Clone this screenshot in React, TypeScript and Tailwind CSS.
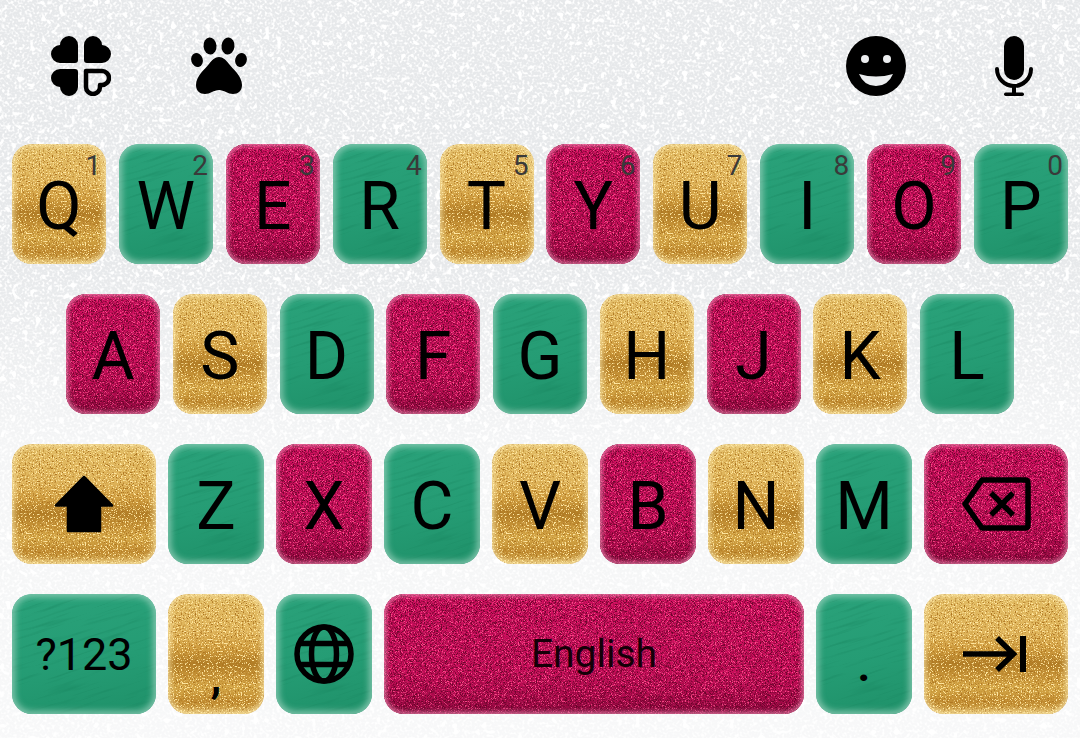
import React from 'react';

type Tone = 'gold' | 'green' | 'rose';

const toneBg: Record<Tone, string> = {
  gold: 'bg-[linear-gradient(180deg,#e2bc64_0%,#dfb45a_32%,#cf9c3e_46%,#b27e26_58%,#c69337_68%,#d5a747_78%,#c08b30_90%,#dcb35a_100%)]',
  green: 'bg-[linear-gradient(170deg,#2aa27a_0%,#259c74_55%,#1f9169_100%)]',
  rose: 'bg-[linear-gradient(180deg,#d20f60_0%,#ca0e5b_65%,#a80b4a_100%)]',
};

const toneEdge: Record<Tone, string> = {
  gold: 'shadow-[inset_0_0_6px_2px_rgba(252,236,180,0.8)]',
  green: 'shadow-[inset_0_0_6px_3px_rgba(165,215,197,0.7)]',
  rose: 'shadow-[inset_0_0_5px_2px_rgba(240,150,185,0.75),inset_0_-10px_14px_-2px_rgba(70,0,30,0.3)]',
};

function Grain({ tone }: { tone: Tone }) {
  return (
    <svg className="absolute inset-0 h-full w-full" aria-hidden="true">
      {tone === 'gold' && <rect width="100%" height="100%" filter="url(#gold-dark)" />}
      {tone === 'gold' && <rect width="100%" height="100%" filter="url(#gold-light)" />}
      {tone === 'green' && (
        <rect x="-200" y="-200" width="1000" height="600" filter="url(#green-wood)" transform="rotate(-18)" />
      )}
      {tone === 'rose' && <rect width="100%" height="100%" filter="url(#rose-dark)" />}
      {tone === 'rose' && <rect width="100%" height="100%" filter="url(#rose-light)" />}
    </svg>
  );
}

function Key({
  tone,
  className = '',
  hint,
  children,
}: {
  tone: Tone;
  className?: string;
  hint?: string;
  children: React.ReactNode;
}) {
  return (
    <div className={`relative h-[120px] overflow-hidden rounded-[20px] ${toneBg[tone]} ${className}`}>
      <Grain tone={tone} />
      <div className={`absolute inset-0 rounded-[20px] ${toneEdge[tone]}`} />
      {hint && (
        <span className="absolute right-[5px] top-[6px] text-[28px] leading-[32px] text-[#3a3a3a]">{hint}</span>
      )}
      <div className="relative flex h-full items-center justify-center">{children}</div>
    </div>
  );
}

function Letter({ tone, char, hint, wide }: { tone: Tone; char: string; hint?: string; wide?: boolean }) {
  return (
    <Key tone={tone} hint={hint} className={wide ? 'w-[96px]' : 'w-[94px]'}>
      <span className="pt-[5px] text-[66px] leading-none text-black">{char}</span>
    </Key>
  );
}

function CloverIcon() {
  const leaf = 'M27 9A9 9 0 0 0 9 9A9 9 0 0 0 9 27H24Q27 27 27 24Z';
  return (
    <svg width="60" height="60" viewBox="0 0 60 60">
      <path d={leaf} />
      <path d={leaf} transform="translate(60 0) scale(-1 1)" />
      <path d={leaf} transform="translate(0 60) scale(1 -1)" />
      <path
        d="M25 9A7 7 0 0 0 11 9V11H9A7 7 0 0 0 9 25H25Z"
        fill="none"
        stroke="#000"
        strokeWidth="4.5"
        strokeLinejoin="round"
        transform="rotate(180 30 30)"
      />
    </svg>
  );
}

function PawIcon() {
  return (
    <svg width="60" height="60" viewBox="0 0 60 60">
      <ellipse cx="8" cy="24" rx="5.8" ry="7" transform="rotate(-18 8 24)" />
      <ellipse cx="21" cy="10" rx="6.5" ry="8.5" transform="rotate(-6 21 10)" />
      <ellipse cx="39" cy="10" rx="6.5" ry="8.5" transform="rotate(6 39 10)" />
      <ellipse cx="52" cy="24" rx="5.8" ry="7" transform="rotate(18 52 24)" />
      <path d="M30 21C26 21 23 24 20 28C16 33 7 40 7 49C7 55 11 58 16 58C21 58 25 54 30 54C35 54 39 58 44 58C49 58 53 55 53 49C53 40 44 33 40 28C37 24 34 21 30 21Z" />
    </svg>
  );
}

function SmileIcon() {
  return (
    <svg width="60" height="60" viewBox="0 0 60 60">
      <circle cx="30" cy="30" r="30" />
      <circle cx="19" cy="23" r="4" fill="#eceef0" />
      <circle cx="41" cy="23" r="4" fill="#eceef0" />
      <path d="M13 38Q30 43 47 38Q42 50 30 50Q18 50 13 38Z" fill="#eceef0" />
    </svg>
  );
}

function MicIcon() {
  return (
    <svg width="60" height="60" viewBox="0 0 60 60">
      <rect x="20" y="0" width="20" height="44" rx="10" />
      <path d="M13 33A17 17 0 0 0 47 33" fill="none" stroke="#000" strokeWidth="4" strokeLinecap="round" />
      <rect x="28" y="49" width="4" height="9" />
      <rect x="20" y="56.5" width="20" height="3.5" rx="1.7" />
    </svg>
  );
}

function ShiftIcon() {
  return (
    <svg width="60" height="60" viewBox="0 0 60 60">
      <path d="M30 3L58 31.5H46V57H14V31.5H2Z" stroke="#000" strokeWidth="2.5" strokeLinejoin="round" />
    </svg>
  );
}

function DeleteIcon() {
  return (
    <svg width="72" height="56" viewBox="0 0 72 56" fill="none" stroke="#000" strokeWidth="5.5">
      <path d="M22 4H65Q68 4 68 7V49Q68 52 65 52H22L5 28Z" strokeLinejoin="round" />
      <path d="M31 17L53 39M53 17L31 39" />
    </svg>
  );
}

function GlobeIcon() {
  return (
    <svg width="60" height="60" viewBox="0 0 60 60" fill="none" stroke="#000" strokeWidth="5.5">
      <circle cx="30" cy="30" r="27" />
      <ellipse cx="30" cy="30" rx="12.5" ry="27" />
      <path d="M5 19.5H55M5 40.5H55" />
    </svg>
  );
}

function TabIcon() {
  return (
    <svg width="66" height="40" viewBox="0 0 66 40" fill="none" stroke="#000" strokeWidth="5.5">
      <path d="M0 20H50M34 4L50.5 20L34 36" />
      <path d="M60 2V38" strokeWidth="6" />
    </svg>
  );
}

const row1: [Tone, string, string][] = [
  ['gold', 'Q', '1'],
  ['green', 'W', '2'],
  ['rose', 'E', '3'],
  ['green', 'R', '4'],
  ['gold', 'T', '5'],
  ['rose', 'Y', '6'],
  ['gold', 'U', '7'],
  ['green', 'I', '8'],
  ['rose', 'O', '9'],
  ['green', 'P', '0'],
];

const row2: [Tone, string][] = [
  ['rose', 'A'],
  ['gold', 'S'],
  ['green', 'D'],
  ['rose', 'F'],
  ['green', 'G'],
  ['gold', 'H'],
  ['rose', 'J'],
  ['gold', 'K'],
  ['green', 'L'],
];

const row3: [Tone, string][] = [
  ['green', 'Z'],
  ['rose', 'X'],
  ['green', 'C'],
  ['gold', 'V'],
  ['rose', 'B'],
  ['gold', 'N'],
  ['green', 'M'],
];

export default function App() {
  return (
    <div className="relative h-[738px] w-[1080px] overflow-hidden bg-[#e7e9eb] font-['Roboto',sans-serif]">
      {/* filtros de textura */}
      <svg className="absolute h-0 w-0" aria-hidden="true">
        <defs>
          <filter id="glitter" x="0" y="0" width="100%" height="100%" colorInterpolationFilters="sRGB">
            <feTurbulence type="fractalNoise" baseFrequency="0.17" numOctaves="1" seed="7" />
            <feColorMatrix values="0 0 0 0 1 0 0 0 0 1 0 0 0 0 1 12 0 0 0 -7.3" />
          </filter>
          <filter id="glitter-fine" x="0" y="0" width="100%" height="100%" colorInterpolationFilters="sRGB">
            <feTurbulence type="fractalNoise" baseFrequency="0.4" numOctaves="1" seed="21" />
            <feColorMatrix values="0 0 0 0 1 0 0 0 0 1 0 0 0 0 1 4 0 0 0 -1.9" />
          </filter>
          <filter id="gold-dark" x="0" y="0" width="100%" height="100%" colorInterpolationFilters="sRGB">
            <feTurbulence type="fractalNoise" baseFrequency="0.7" numOctaves="2" seed="4" />
            <feColorMatrix values="0 0 0 0 0.68 0 0 0 0 0.46 0 0 0 0 0.13 6 0 0 0 -3.3" />
          </filter>
          <filter id="gold-light" x="0" y="0" width="100%" height="100%" colorInterpolationFilters="sRGB">
            <feTurbulence type="fractalNoise" baseFrequency="0.75" numOctaves="2" seed="11" />
            <feColorMatrix values="0 0 0 0 1 0 0 0 0 0.9 0 0 0 0 0.62 8 0 0 0 -4.6" />
          </filter>
          <filter id="green-wood" x="0" y="0" width="100%" height="100%" colorInterpolationFilters="sRGB">
            <feTurbulence type="fractalNoise" baseFrequency="0.02 0.3" numOctaves="3" seed="5" />
            <feColorMatrix values="0 0 0 0 0.09 0 0 0 0 0.52 0 0 0 0 0.37 1.5 0 0 0 -0.8" />
          </filter>
          <filter id="rose-dark" x="0" y="0" width="100%" height="100%" colorInterpolationFilters="sRGB">
            <feTurbulence type="fractalNoise" baseFrequency="1.2" numOctaves="2" seed="9" />
            <feColorMatrix values="0 0 0 0 0.42 0 0 0 0 0.02 0 0 0 0 0.17 4 0 0 0 -1.75" />
          </filter>
          <filter id="rose-light" x="0" y="0" width="100%" height="100%" colorInterpolationFilters="sRGB">
            <feTurbulence type="fractalNoise" baseFrequency="1.3" numOctaves="1" seed="2" />
            <feColorMatrix values="0 0 0 0 1 0 0 0 0 0.3 0 0 0 0 0.55 8 0 0 0 -4.6" />
          </filter>
        </defs>
      </svg>

      {/* fundo com glitter */}
      <svg className="absolute inset-0 h-full w-full" aria-hidden="true">
        <rect width="100%" height="100%" filter="url(#glitter-fine)" />
        <rect width="100%" height="100%" filter="url(#glitter)" />
      </svg>
      <div className="absolute inset-0 bg-gradient-to-b from-transparent from-35% via-white/55 via-60% to-white/70" />

      <div className="relative">
        {/* toolbar */}
        <div className="flex h-[144px] items-start pl-[51px] pr-[36px] pt-[36px]">
          <div className="flex gap-[78px]">
            <CloverIcon />
            <PawIcon />
          </div>
          <div className="ml-auto flex gap-[78px]">
            <SmileIcon />
            <MicIcon />
          </div>
        </div>

        <div className="flex flex-col gap-[30px]">
          <div className="flex justify-between px-[12px]">
            {row1.map(([tone, char, hint]) => (
              <Letter key={char} tone={tone} char={char} hint={hint} />
            ))}
          </div>

          <div className="flex justify-between px-[66px]">
            {row2.map(([tone, char]) => (
              <Letter key={char} tone={tone} char={char} />
            ))}
          </div>

          <div className="flex gap-[12px] px-[12px]">
            <Key tone="gold" className="w-[144px]">
              <ShiftIcon />
            </Key>
            {row3.map(([tone, char]) => (
              <Letter key={char} tone={tone} char={char} wide />
            ))}
            <Key tone="rose" className="w-[144px]">
              <DeleteIcon />
            </Key>
          </div>

          <div className="flex gap-[12px] px-[12px]">
            <Key tone="green" className="w-[144px]">
              <span className="text-[45px] leading-none text-black">?123</span>
            </Key>
            <Key tone="gold" className="w-[96px]">
              <span className="pt-[46px] text-[44px] font-bold leading-none text-black">,</span>
            </Key>
            <Key tone="green" className="w-[96px]">
              <GlobeIcon />
            </Key>
            <Key tone="rose" className="w-[420px]">
              <span className="text-[39px] leading-none text-[#150008]">English</span>
            </Key>
            <Key tone="green" className="w-[96px]">
              <span className="pt-[24px] text-[44px] font-bold leading-none text-black">.</span>
            </Key>
            <Key tone="gold" className="w-[144px]">
              <TabIcon />
            </Key>
          </div>
        </div>
      </div>
    </div>
  );
}
